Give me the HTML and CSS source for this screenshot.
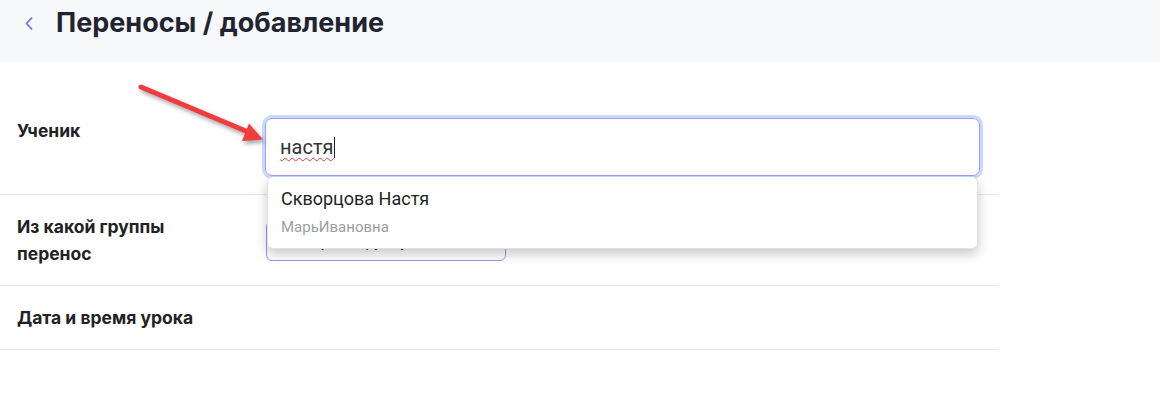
FILE: index.html
```html
<!DOCTYPE html>
<html lang="ru">
<head>
<meta charset="utf-8">
<title>Переносы / добавление</title>
<link rel="stylesheet" href="styles.css">
</head>
<body>
<header class="header">
  <svg class="back" width="8" height="13" viewBox="0 0 8 13"><path d="M6.5 1.2 L1.5 6.5 L6.5 11.8" fill="none" stroke="#7a6cf5" stroke-width="1.7" stroke-linecap="round" stroke-linejoin="round"/></svg>
  <h1 class="title">Переносы / добавление</h1>
</header>
<main class="form">
  <div class="row row-student">
    <div class="label">Ученик</div>
    <div class="field">
      <div class="input"><span class="typed">настя</span><span class="caret"></span></div>
      <div class="dropdown">
        <div class="opt-name">Скворцова Настя</div>
        <div class="opt-sub">МарьИвановна</div>
      </div>
    </div>
  </div>
  <div class="row">
    <div class="label">Из какой группы<br>перенос</div>
    <div class="select">Выберите группу</div>
  </div>
  <div class="row">
    <div class="label">Дата и время урока</div>
  </div>
</main>
<svg class="arrow" width="1160" height="418" viewBox="0 0 1160 418">
  <g class="arrow-g">
    <line x1="141" y1="87" x2="247" y2="131.5" stroke="#f03c3c" stroke-width="5" stroke-linecap="round"/>
    <polygon points="263,139.5 242,141 249,123.5" fill="#f03c3c"/>
  </g>
</svg>
</body>
</html>
```
FILE: styles.css
```css
html, body {
  margin: 0;
  padding: 0;
  background: #ffffff;
}
body {
  position: relative;
  width: 1160px;
  height: 418px;
  overflow: hidden;
  font-family: Inter, "Noto Sans", sans-serif;
  color: #222;
}
.header {
  box-sizing: border-box;
  height: 62px;
  background: #f7f8fa;
  display: flex;
  align-items: flex-start;
  padding: 7px 0 0 25px;
}
.back {
  margin-top: 10px;
  flex: none;
}
.title {
  margin: 0 0 0 23px;
  font-size: 27px;
  line-height: 32px;
  font-weight: 700;
  color: #1f2430;
  letter-spacing: 0;
}
.form {
  padding-top: 38px;
  width: 998px;
}
.row {
  display: flex;
  align-items: flex-start;
  padding: 18px 18px 18px 17px;
  border-bottom: 1px solid #e6e6e6;
}
.label {
  width: 248px;
  flex: none;
  font-size: 17.5px;
  font-weight: 700;
  line-height: 27px;
  color: #222;
}
.row-student .label {
  line-height: 26px;
  margin-top: 0;
}
.field {
  position: relative;
  flex: 1;
}
.input {
  box-sizing: border-box;
  height: 58px;
  border: 1px solid #a49bf4;
  border-radius: 7px;
  box-shadow: 0 0 0 3px #c5dcff;
  padding-left: 14px;
  display: flex;
  align-items: center;
  font-family: Roboto, "Noto Sans", sans-serif;
  font-size: 20px;
  color: #333;
}
.typed {
  text-decoration: underline wavy #e53935;
  text-decoration-thickness: 1px;
  text-underline-offset: 3px;
}
.caret {
  display: inline-block;
  width: 1px;
  height: 21px;
  background: #222;
  margin-left: 1px;
}
.dropdown {
  position: absolute;
  top: 59px;
  left: 2px;
  width: 711px;
  box-sizing: border-box;
  padding: 11px 13px 11px 13px;
  background: #fff;
  border: 1px solid #e2e2e2;
  border-top: none;
  border-radius: 6px;
  box-shadow: 0 5px 12px rgba(0, 0, 0, 0.22);
  font-family: Roboto, "Noto Sans", sans-serif;
  z-index: 2;
}
.opt-name {
  font-size: 18px;
  line-height: 22px;
  color: #222;
}
.opt-sub {
  margin-top: 7px;
  font-size: 15px;
  line-height: 20px;
  color: #9e9e9e;
}
.select {
  box-sizing: border-box;
  margin-top: 8px;
  width: 240px;
  height: 40px;
  border: 1px solid #9d94ef;
  border-radius: 6px;
  padding-left: 14px;
  display: flex;
  align-items: center;
  font-family: Roboto, "Noto Sans", sans-serif;
  font-size: 16px;
  color: #222;
  margin-left: 1px;
}
.arrow {
  position: absolute;
  left: 0;
  top: 0;
  pointer-events: none;
  z-index: 5;
}
.arrow-g {
  filter: drop-shadow(2px 3px 2px rgba(0, 0, 0, 0.35));
}
```
